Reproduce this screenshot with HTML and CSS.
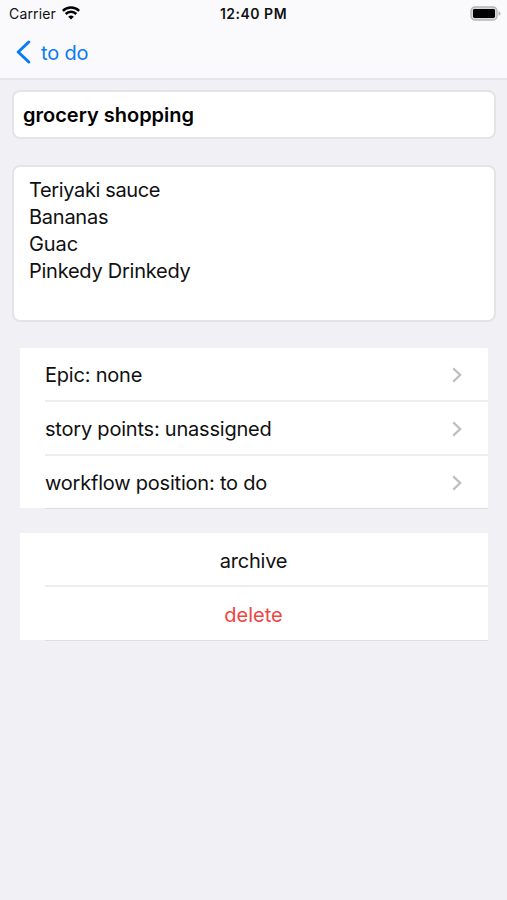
FILE: index.html
```html
<!DOCTYPE html>
<html lang="en">
<head>
<meta charset="utf-8">
<title>grocery shopping</title>
<link rel="stylesheet" href="styles.css">
</head>
<body>
<header class="top">
  <div class="status">
    <div class="status-left">
      <span class="carrier">Carrier</span>
      <svg class="wifi" width="18" height="14" viewBox="0 0 18 14" fill="none" stroke="#000" stroke-width="2.5">
        <path d="M.8 4.9a11.6 11.6 0 0 1 16.4 0M3.7 8a7.5 7.5 0 0 1 10.6 0"/>
        <path d="M9 13.6 6.2 10.8a4 4 0 0 1 5.6 0z" fill="#000" stroke="none"/>
      </svg>
    </div>
    <time class="clock">12:40 PM</time>
    <div class="status-right">
      <svg width="31" height="15" viewBox="0 0 31 15">
        <rect x="1" y="1" width="26" height="13" rx="3.8" fill="#d8d8da" stroke="#b4b4b6" stroke-width="1.3"/>
        <rect x="3" y="3" width="22" height="9" rx="1.4" fill="#000"/>
        <path d="M28.5 5.2q2 .6 2 2.3t-2 2.3z" fill="#b0b0b2"/>
      </svg>
    </div>
  </div>
  <nav class="nav">
    <svg width="16" height="24" viewBox="0 0 16 24" fill="none" stroke="#087cf5" stroke-width="3" stroke-linecap="round" stroke-linejoin="round"><path d="M13.8 2 3.2 12l10.6 10"/></svg>
    <span class="back">to do</span>
  </nav>
</header>
<main>
  <h1 class="card title"><span>grocery shopping</span></h1>
  <div class="card notes">
    <p class="tight">Teriyaki sauce</p>
    <p>Bananas</p>
    <p class="loose">Guac</p>
    <p>Pinkedy Drinkedy</p>
  </div>
  <section class="list">
    <div class="row"><span>Epic: none</span><svg class="chevron" viewBox="0 0 10 16"><path d="m1.2 1.4 7 6.6-7 6.6"/></svg></div>
    <div class="row"><span>story points: unassigned</span><svg class="chevron" viewBox="0 0 10 16"><path d="m1.2 1.4 7 6.6-7 6.6"/></svg></div>
    <div class="row"><span>workflow position: to do</span><svg class="chevron" viewBox="0 0 10 16"><path d="m1.2 1.4 7 6.6-7 6.6"/></svg></div>
  </section>
  <section class="list actions">
    <div class="row"><span>archive</span></div>
    <div class="row"><span class="delete">delete</span></div>
  </section>
</main>
</body>
</html>
```
FILE: styles.css
```css
* { box-sizing: border-box; }
body {
  margin: 0;
  min-height: 900px;
  background: #f0f0f5;
  color: #101012;
  font-family: Inter, "Liberation Sans", sans-serif;
  font-size: 20px;
}
.top {
  height: 80px;
  background: #fafafd;
  border-bottom: 2px solid #e6e6ea;
}
.status {
  display: grid;
  grid-template-columns: 1fr auto 1fr;
  height: 27px;
  align-items: center;
  padding: 0 6px 0 9px;
}
.status-left { display: flex; align-items: center; gap: 6px; }
.wifi { margin-top: -1px; }
.carrier { font-size: 14px; line-height: 20px; padding-top: 1px; letter-spacing: 0.15px; }
.clock { font-size: 14px; line-height: 20px; font-weight: 600; padding-top: 1px; letter-spacing: 0.5px; margin-left: -3px; }
.status-right { display: flex; justify-content: flex-end; }
.nav { display: flex; align-items: center; height: 50px; padding-left: 15px; gap: 10px; }
.back { color: #087cf5; padding-top: 2px; letter-spacing: -0.15px; }
main { padding: 10px 11px 0 12px; }
.card { margin: 0; background: #fff; border: 2px solid #e4e4e8; border-radius: 8px; }
.title { height: 49px; padding: 0 9px; display: flex; align-items: center; font-size: 20px; font-weight: 600; color: #000; }
.notes { height: 157px; margin-top: 26px; padding: 10px 15px; }
.notes p { margin: 0; line-height: 27px; letter-spacing: -0.25px; }
.notes .tight { letter-spacing: -0.36px; }
.notes .loose { letter-spacing: -0.1px; }
.list {
  margin: 26px 8px 0;
  padding-left: 25px;
  background: linear-gradient(#fff, #fff) 0 0 / 100% calc(100% - 1px) no-repeat;
}
.row {
  height: 53.8px;
  display: flex;
  align-items: center;
  justify-content: space-between;
  padding: 2px 26px 0 0;
  border-bottom: 2px solid #eeeef0;
  letter-spacing: -0.21px;
}
.row:last-child { border-bottom: 1px solid #dedee1; }
.chevron { width: 10px; height: 16px; fill: none; stroke: #bebec0; stroke-width: 2.2; }
.actions { margin-top: 24px; }
.actions .row { justify-content: center; padding-top: 4px; }
.actions .row:last-child { padding-top: 2px; }
.delete { color: #ee453f; letter-spacing: 0; }
```
